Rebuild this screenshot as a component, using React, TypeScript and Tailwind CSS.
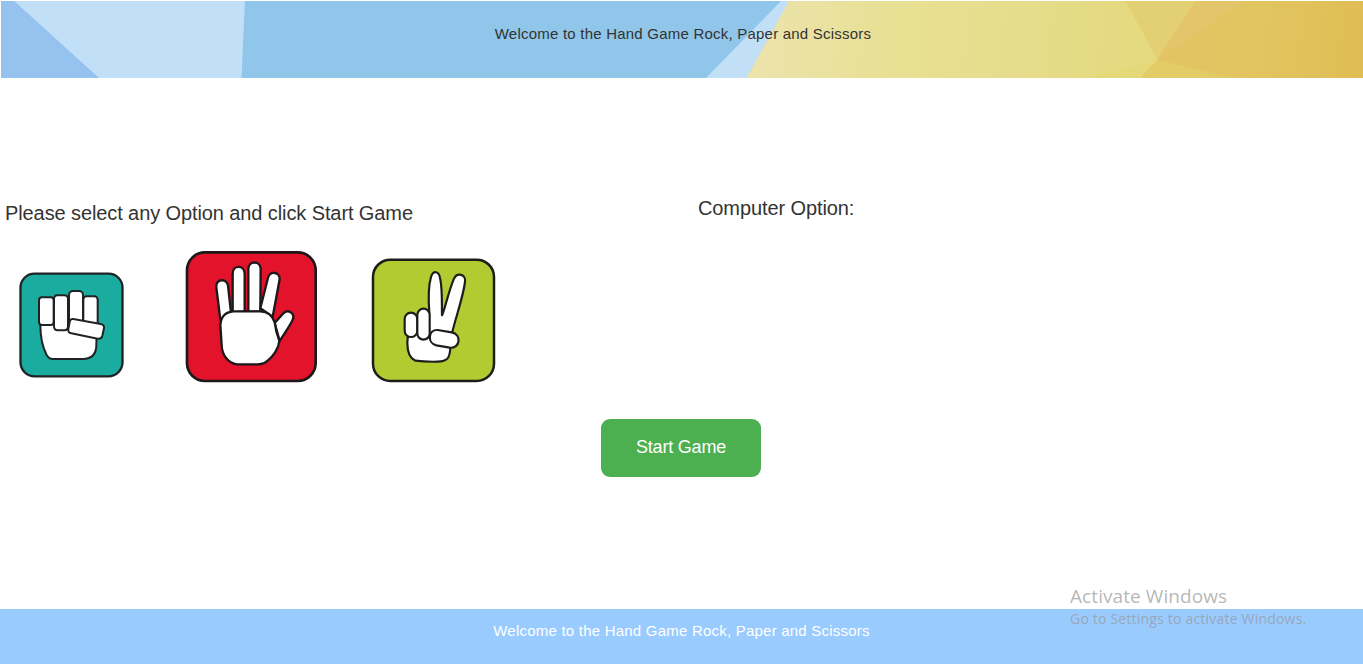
import { useState } from "react";

const TITLE = "Welcome to the Hand Game Rock, Paper and Scissors";

function HeaderArt() {
  return (
    <svg className="absolute inset-0 h-full w-full" viewBox="1 1 1362 77" preserveAspectRatio="none" aria-hidden="true">
      <defs>
        <linearGradient id="gold" gradientUnits="userSpaceOnUse" x1="760" y1="20" x2="1160" y2="60">
          <stop offset="0" stopColor="#ebe3aa" />
          <stop offset="0.35" stopColor="#e8e093" />
          <stop offset="0.65" stopColor="#e6dc8b" />
          <stop offset="1" stopColor="#e4d97c" />
        </linearGradient>
        <linearGradient id="amber" gradientUnits="userSpaceOnUse" x1="1160" y1="20" x2="1363" y2="50">
          <stop offset="0" stopColor="#e3c465" />
          <stop offset="0.55" stopColor="#e2c45f" />
          <stop offset="1" stopColor="#dfbd53" />
        </linearGradient>
      </defs>
      <rect x="0" y="0" width="1363" height="78" fill="#8fc6e9" />
      <path d="M0 0H13L99 78H0Z" fill="#95c2ee" />
      <path d="M13 0H245L241.500 78H99Z" fill="#c1dff7" />
      <path d="M782 0H790L747 78H706Z" fill="#c1dff7" />
      <path d="M789.500 0H1363V78H746.500Z" fill="url(#gold)" />
      <path d="M1125 0H1197L1157.500 60Z" fill="#e4d074" />
      <path d="M1196 0H1363V78H1230L1157 60Z" fill="url(#amber)" />
      <path d="M1196 0H1245L1157 60Z" fill="#e4c56b" />
      <path d="M1157 60L1232 78H1140Z" fill="#e2cc66" />
      <path d="M1157 60L1140 78H1090Z" fill="#e4d878" />
    </svg>
  );
}

function RockIcon() {
  return (
    <svg className="block h-[120px] w-[125px]" viewBox="0 0 375 360" aria-hidden="true">
      <rect x="31.500" y="26" width="306" height="308" rx="42" fill="#1baca0" stroke="#202226" strokeWidth="7" />
      <g fill="#fff" stroke="#202226" strokeWidth="6" strokeLinejoin="round">
        <path d="M91 178C91 210 98 248 110 270Q117 282 129 282H222C247 280 259 264 259 240L260 208L250 150H100Z" />
        <rect x="220" y="94" width="43" height="105" rx="10" />
        <rect x="177" y="78" width="42" height="113" rx="12" />
        <rect x="87" y="97" width="44" height="83" rx="9" />
        <path d="M142 91H163Q174 91 174 102V184Q174 196 163 196H143Q132 196 132 184V102Q132 91 142 91Z" />
        <path d="M190 162L272 177Q283 179 282 189L277 212Q274 223 263 221L184 205Q173 203 175 192L179 171Q181 160 190 162Z" />
      </g>
    </svg>
  );
}

function PaperIcon() {
  return (
    <svg className="block size-[145px]" viewBox="0 0 435 435" aria-hidden="true">
      <rect x="21" y="22" width="386" height="386" rx="54" fill="#e3132c" stroke="#1d191b" strokeWidth="8" />
      <g fill="#fff" stroke="#1d191b" strokeWidth="7" strokeLinejoin="round">
        <path d="M121 224L109 127C106 100 140 99 144 122L153 203Z" />
        <path d="M158 202V86C158 59 193 59 194 86V200Z" />
        <path d="M205 200V72C206 46 241 46 242 72L241 200Z" />
        <path d="M241 190L264 98C271 76 300 81 299 103L278 215Z" />
        <path d="M284 234L309 206C325 189 346 207 338 224Q333 237 299 288Z" />
        <path d="M160 199H241C265 200 278 212 284 232L289 259L298 288C296 312 278 335 263 347Q252 358 234 358H171C144 355 126 330 125 301L121 240C123 214 136 201 160 199Z" />
      </g>
    </svg>
  );
}

function ScissorsIcon() {
  return (
    <svg className="block size-[140px]" viewBox="0 0 420 420" aria-hidden="true">
      <rect x="24" y="29" width="363" height="364" rx="52" fill="#b1cb31" stroke="#1d1d1b" strokeWidth="7.500" />
      <g fill="#fff" stroke="#1d1d1b" strokeWidth="6.500" strokeLinejoin="round">
        <path d="M193 190C190 149 190 108 198 81C204 61 221 62 225 83C233 117 230 164 231 196C239 181 250 126 266 88C276 65 304 73 300 96C294 143 273 199 262 246L256 294C255 309 253 321 246 327Q236 335 219 335Q180 336 151 332C133 324 127 301 127 278L129 253L175 190Z" />
        <rect x="119" y="188" width="38" height="73" rx="19" />
        <rect x="157" y="176" width="37" height="93" rx="18.500" />
        <path d="M218 240L260 247C292 253 285 297 254 293L214 286C186 280 189 238 218 240Z" />
      </g>
    </svg>
  );
}

const OPTIONS = [
  { name: "rock", Icon: RockIcon, spacing: "mt-5" },
  { name: "paper", Icon: PaperIcon, spacing: "ml-[45px]" },
  { name: "scissors", Icon: ScissorsIcon, spacing: "ml-10 mt-[5px]" },
];

export default function App() {
  const [, setChoice] = useState("rock");

  return (
    <div className="relative flex h-screen flex-col overflow-hidden bg-white font-['Liberation_Sans',Arial,sans-serif] text-[#333]">
      <header className="relative ml-px mt-px h-[77px] shrink-0 pl-0.5 pt-[22px] text-center">
        <HeaderArt />
        <p className="relative text-[15px] leading-[21px] tracking-[0.22px]">{TITLE}</p>
      </header>

      <main className="flex flex-1 flex-col">
        <div className="grid grid-cols-[693px_1fr] pt-[120px]">
          <section>
            <h1 className="pl-[5px] pt-px text-[20px] leading-[28px] tracking-[-0.1px]">Please select any Option and click Start Game</h1>
            <div className="mt-[18px] flex items-start pl-2.5">
              {OPTIONS.map(({ name, Icon, spacing }) => (
                <button key={name} type="button" className={spacing} onClick={() => setChoice(name)}>
                  <Icon />
                </button>
              ))}
            </div>
          </section>
          <section className="pl-[5px]">
            <h2 className="-mt-1 text-[20px] leading-[28px] tracking-[-0.1px]">Computer Option:</h2>
          </section>
        </div>
        <button type="button" className="ml-[601px] mt-[29px] h-[58px] w-40 rounded-[9px] bg-[#4caf50] pb-0.5 text-[18px] tracking-[-0.2px] text-white">
          Start Game
        </button>
      </main>

      <footer className="h-[55px] shrink-0 bg-[#99cbff] pt-[11px] text-center text-[15px] leading-[21px] tracking-[0.22px] text-white">{TITLE}</footer>

      <aside className="pointer-events-none absolute left-[1070px] top-[583px] whitespace-nowrap font-['Open_Sans','Noto_Sans',sans-serif] text-[#979797]/70">
        <p className="text-[19px] leading-[26px] tracking-[0.08px]">Activate Windows</p>
        <p className="text-[14px] leading-[20px] tracking-[0.2px]">Go to Settings to activate Windows.</p>
      </aside>
    </div>
  );
}
